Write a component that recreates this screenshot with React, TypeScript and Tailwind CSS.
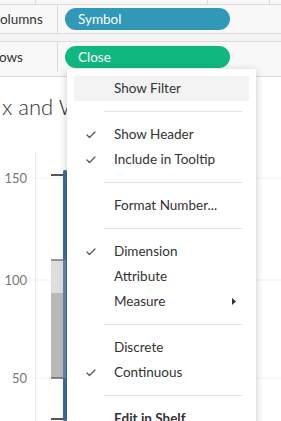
import { Check } from 'lucide-react'

const font = { fontFamily: 'Lato, "Open Sans", sans-serif' }

type Item = { label: string; checked?: boolean; sub?: boolean; active?: boolean; bold?: boolean } | 'sep'

const ITEMS: Item[] = [
  { label: 'Show Filter', active: true },
  'sep',
  { label: 'Show Header', checked: true },
  { label: 'Include in Tooltip', checked: true },
  'sep',
  { label: 'Format Number...' },
  'sep',
  { label: 'Dimension', checked: true },
  { label: 'Attribute' },
  { label: 'Measure', sub: true },
  'sep',
  { label: 'Discrete' },
  { label: 'Continuous', checked: true },
  'sep',
  { label: 'Edit in Shelf', bold: true },
]

function Shelf({ label, pill, color, offset }: { label: string; pill: string; color: string; offset: string }) {
  return (
    <div className="flex h-full items-stretch">
      <div className="w-[58px] overflow-hidden border-r border-[#dadada] flex items-center">
        <span className={`text-[13.5px] text-[#333] whitespace-nowrap ${offset}`}>{label}</span>
      </div>
      <div className="flex-1 flex items-center pl-[7px]">
        <div className={`w-[165px] h-[22px] rounded-full flex items-center pl-[13px] text-white text-[13.5px] ${color}`}>
          {pill}
        </div>
      </div>
    </div>
  )
}

function Chart() {
  return (
    <svg width="281" height="344" className="block">
      <line x1="35.5" y1="75" x2="35.5" y2="344" stroke="#ececec" />
      {[101, 203, 301].map(y => (
        <line key={y} x1="29" y1={y} x2="281" y2={y} stroke="#f2f2f2" />
      ))}
      <text x="27" y="106" textAnchor="end" fontSize="13" fill="#777" style={font}>150</text>
      <text x="27" y="208" textAnchor="end" fontSize="13" fill="#777" style={font}>100</text>
      <text x="27" y="306" textAnchor="end" fontSize="13" fill="#777" style={font}>50</text>
      {/* box */}
      <rect x="51" y="183" width="15" height="33" fill="#dedede" />
      <rect x="51" y="216" width="15" height="85" fill="#b9b9b9" />
      <line x1="51" y1="183" x2="66" y2="183" stroke="#777" strokeWidth="1.5" />
      <line x1="51" y1="301" x2="66" y2="301" stroke="#666" strokeWidth="1.5" />
      <line x1="51" y1="98" x2="66" y2="98" stroke="#555" strokeWidth="2" />
      <line x1="51" y1="342" x2="66" y2="342" stroke="#555" strokeWidth="2" />
      {/* blue trace */}
      <rect x="63" y="93" width="4" height="251" rx="1.5" fill="#3f6ea6" />
      <rect x="63" y="183" width="3" height="118" fill="#7f93ad" opacity="0.7" />
    </svg>
  )
}

export default function App() {
  return (
    <div className="relative w-[281px] h-[421px] overflow-hidden bg-white" style={font}>
      {/* top strip */}
      <div className="h-[5px] bg-[#f7f7f7] border-b border-[#dcdcdc] flex">
        <div className="w-[36px] border-r border-[#dcdcdc]" />
        <div className="w-[172px] border-r border-[#dcdcdc]" />
        <div className="w-[62px] border-r border-[#dcdcdc]" />
      </div>
      <div className="h-[29px] bg-[#f8f8f8] border-b border-[#dcdcdc]">
        <Shelf label="Columns" pill="Symbol" color="bg-[#3298b8]" offset="ml-[-9px]" />
      </div>
      <div className="h-[8px] bg-[#f4f4f4] border-b border-[#dcdcdc]" />
      <div className="h-[35px] bg-[#f8f8f8] border-b border-[#dcdcdc] pb-[4px]">
        <Shelf label="Rows" pill="Close" color="bg-[#0fb87f]" offset="ml-[-9px]" />
      </div>

      {/* chart */}
      <div className="pt-[18px] pl-[2px] text-[22px] leading-[24px] font-light text-[#333] whitespace-nowrap">
        x and Whisker
      </div>
      <div className="-mt-[42px]">
        <Chart />
      </div>

      {/* context menu */}
      <div className="absolute left-[67px] top-[69px] w-[189px] bg-white shadow-[0_2px_8px_rgba(0,0,0,0.22)] pt-[7px] px-[7px]">
        {ITEMS.map((it, i) =>
          it === 'sep' ? (
            <div key={i} className="h-[21px] flex items-center pl-[30px] pr-[7px]">
              <div className="h-px w-full bg-[#e2e2e2]" />
            </div>
          ) : (
            <div
              key={i}
              className={`h-[25px] flex items-center text-[13.5px] text-[#333] ${it.active ? 'bg-[#f3f3f3]' : ''} ${it.bold ? 'font-bold' : ''}`}
            >
              <div className="w-[40px] flex justify-start pl-[11px]">
                {it.checked && <Check size={12} strokeWidth={2.5} className="text-[#555]" />}
              </div>
              <span className="flex-1 whitespace-nowrap">{it.label}</span>
              {it.sub && (
                <svg width="4" height="7" className="mr-[13px]">
                  <path d="M0 0 L4 3.5 L0 7 Z" fill="#333" />
                </svg>
              )}
            </div>
          )
        )}
      </div>
    </div>
  )
}
